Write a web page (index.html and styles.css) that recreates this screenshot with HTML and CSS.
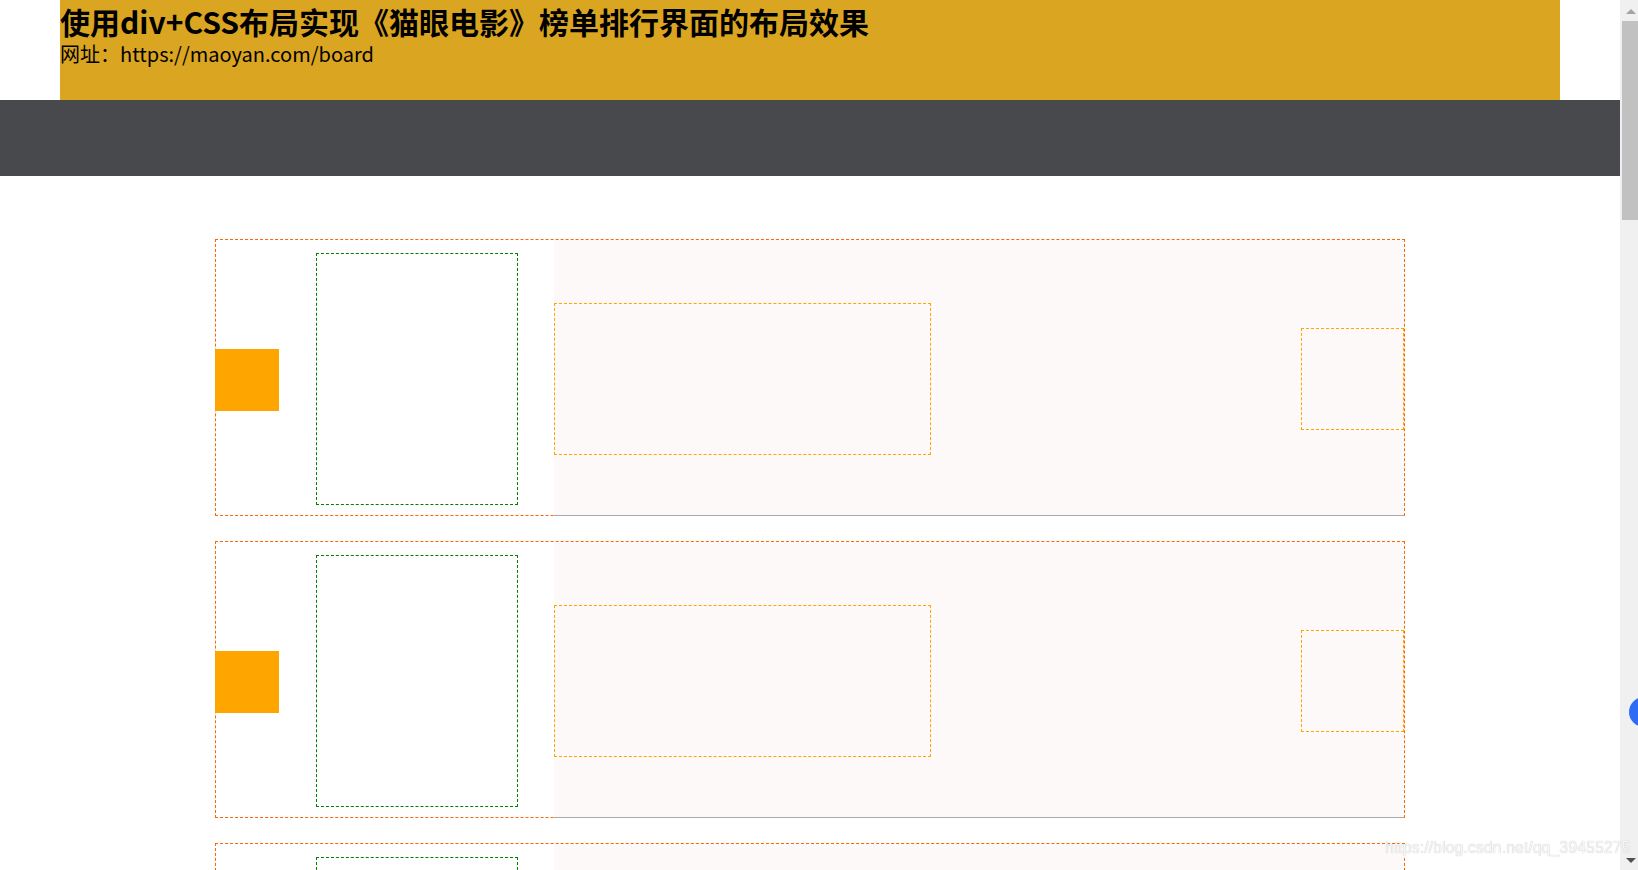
FILE: index.html
```html
<!DOCTYPE html>
<html lang="zh-CN">
<head>
    <meta charset="UTF-8">
    <title>猫眼电影 榜单排行</title>
    <link rel="stylesheet" href="styles.css">
</head>
<body>
<div class="page">
    <div class="header">
        <h1>使用div+CSS布局实现《猫眼电影》榜单排行界面的布局效果</h1>
        <p>网址：https://maoyan.com/board</p>
    </div>
    <div class="nav"></div>

    <!--榜单：每一项 = 排名 + 海报 + 信息(影片描述 + 评分)-->
    <ul class="board">
        <li class="board-item">
            <div class="rank"><i></i></div>
            <div class="poster"></div>
            <div class="info">
                <div class="movie-desc"></div>
                <div class="score"></div>
            </div>
        </li>
        <li class="board-item">
            <div class="rank"><i></i></div>
            <div class="poster"></div>
            <div class="info">
                <div class="movie-desc"></div>
                <div class="score"></div>
            </div>
        </li>
        <li class="board-item">
            <div class="rank"><i></i></div>
            <div class="poster"></div>
            <div class="info">
                <div class="movie-desc"></div>
                <div class="score"></div>
            </div>
        </li>
        <li class="board-item">
            <div class="rank"><i></i></div>
            <div class="poster"></div>
            <div class="info">
                <div class="movie-desc"></div>
                <div class="score"></div>
            </div>
        </li>
    </ul>
</div>

<!--模拟浏览器的竖向滚动条-->
<div class="scrollbar">
    <div class="scroll-btn scroll-up"><i></i></div>
    <div class="scroll-thumb"></div>
    <div class="scroll-track"></div>
    <div class="scroll-btn scroll-down"><i></i></div>
</div>

<div class="float-badge"></div>
<div class="watermark">https://blog.csdn.net/qq_39455275</div>
</body>
</html>
```

FILE: styles.css
```css
/*reset*/
* {
    margin: 0;
    padding: 0;
    box-sizing: border-box;
}

li {
    list-style: none;
}

html, body {
    height: 100%;
    overflow: hidden;
}

body {
    display: flex;
    font-family: "Noto Sans CJK SC", "Microsoft YaHei", sans-serif;
    color: #000;
    background-color: #fff;
}

.page {
    flex: 1;
    height: 100%;
    overflow: hidden;
}

/*头部*/
.header {
    width: 1500px;
    height: 100px;
    margin: 0 auto;
    padding-top: 1px;
    background-color: #daa520;
}

.header h1 {
    font-size: 30px;
    font-weight: bold;
    line-height: 40px;
}

.header p {
    font-size: 20px;
    line-height: 26px;
}

.nav {
    height: 76px;
    background-color: #48494d;
}

/*榜单*/
.board {
    width: 1190px;
    margin: 63px auto 0;
}

.board-item {
    display: flex;
    align-items: flex-start;
    height: 277px;
    margin-bottom: 25px;
    border: 1px dashed #f60;
}

.rank {
    width: 100px;
    flex-shrink: 0;
}

.rank i {
    display: block;
    width: 64px;
    height: 62px;
    margin: 109px 0 0 -1px;
    background-color: #ffa500;
}

.poster {
    width: 202px;
    height: 252px;
    margin: 13px 36px 0 0;
    border: 1px dashed green;
    flex-shrink: 0;
}

.info {
    flex: 1;
    display: flex;
    justify-content: space-between;
    align-items: flex-start;
    height: 276px; /*压住外框的下边线*/
    background-color: #fdf9f8;
    border-bottom: 1px solid #aaa;
}

.movie-desc {
    width: 377px;
    height: 152px;
    margin-top: 63px;
    border: 1px dashed #ffa500;
}

.score {
    width: 103px;
    height: 102px;
    margin-top: 88px;
    border: 1px dashed #ffa500;
}

/*滚动条*/
.scrollbar {
    width: 18px;
    height: 100%;
    flex-shrink: 0;
    display: flex;
    flex-direction: column;
    background-color: #f0f0f0;
}

.scroll-btn {
    height: 17px;
    padding-left: 6px;
}

.scroll-btn i {
    display: block;
    width: 0;
    height: 0;
    border-left: 5px solid transparent;
    border-right: 5px solid transparent;
}

.scroll-up {
    height: 21px;
    padding-top: 9px;
}

.scroll-up i {
    border-bottom: 5px solid #a3a3a3;
}

.scroll-down {
    padding-top: 5px;
}

.scroll-down i {
    border-top: 5px solid #505050;
}

.scroll-thumb {
    height: 199px;
    margin-left: 2px;
    background-color: #c1c1c1;
}

.scroll-track {
    flex: 1;
}

/*右侧浮动小图标*/
.float-badge {
    position: fixed;
    top: 697px;
    left: 1629px;
    width: 30px;
    height: 30px;
    border-radius: 50%;
    background-color: #2e6cf6;
}

.watermark {
    position: fixed;
    top: 839px;
    left: 1385px;
    font-family: "Liberation Sans", Arial, sans-serif;
    font-size: 16px;
    color: #f6f6f6;
    text-shadow: 0 0 1px #b0b0b0;
    pointer-events: none;
}
```
